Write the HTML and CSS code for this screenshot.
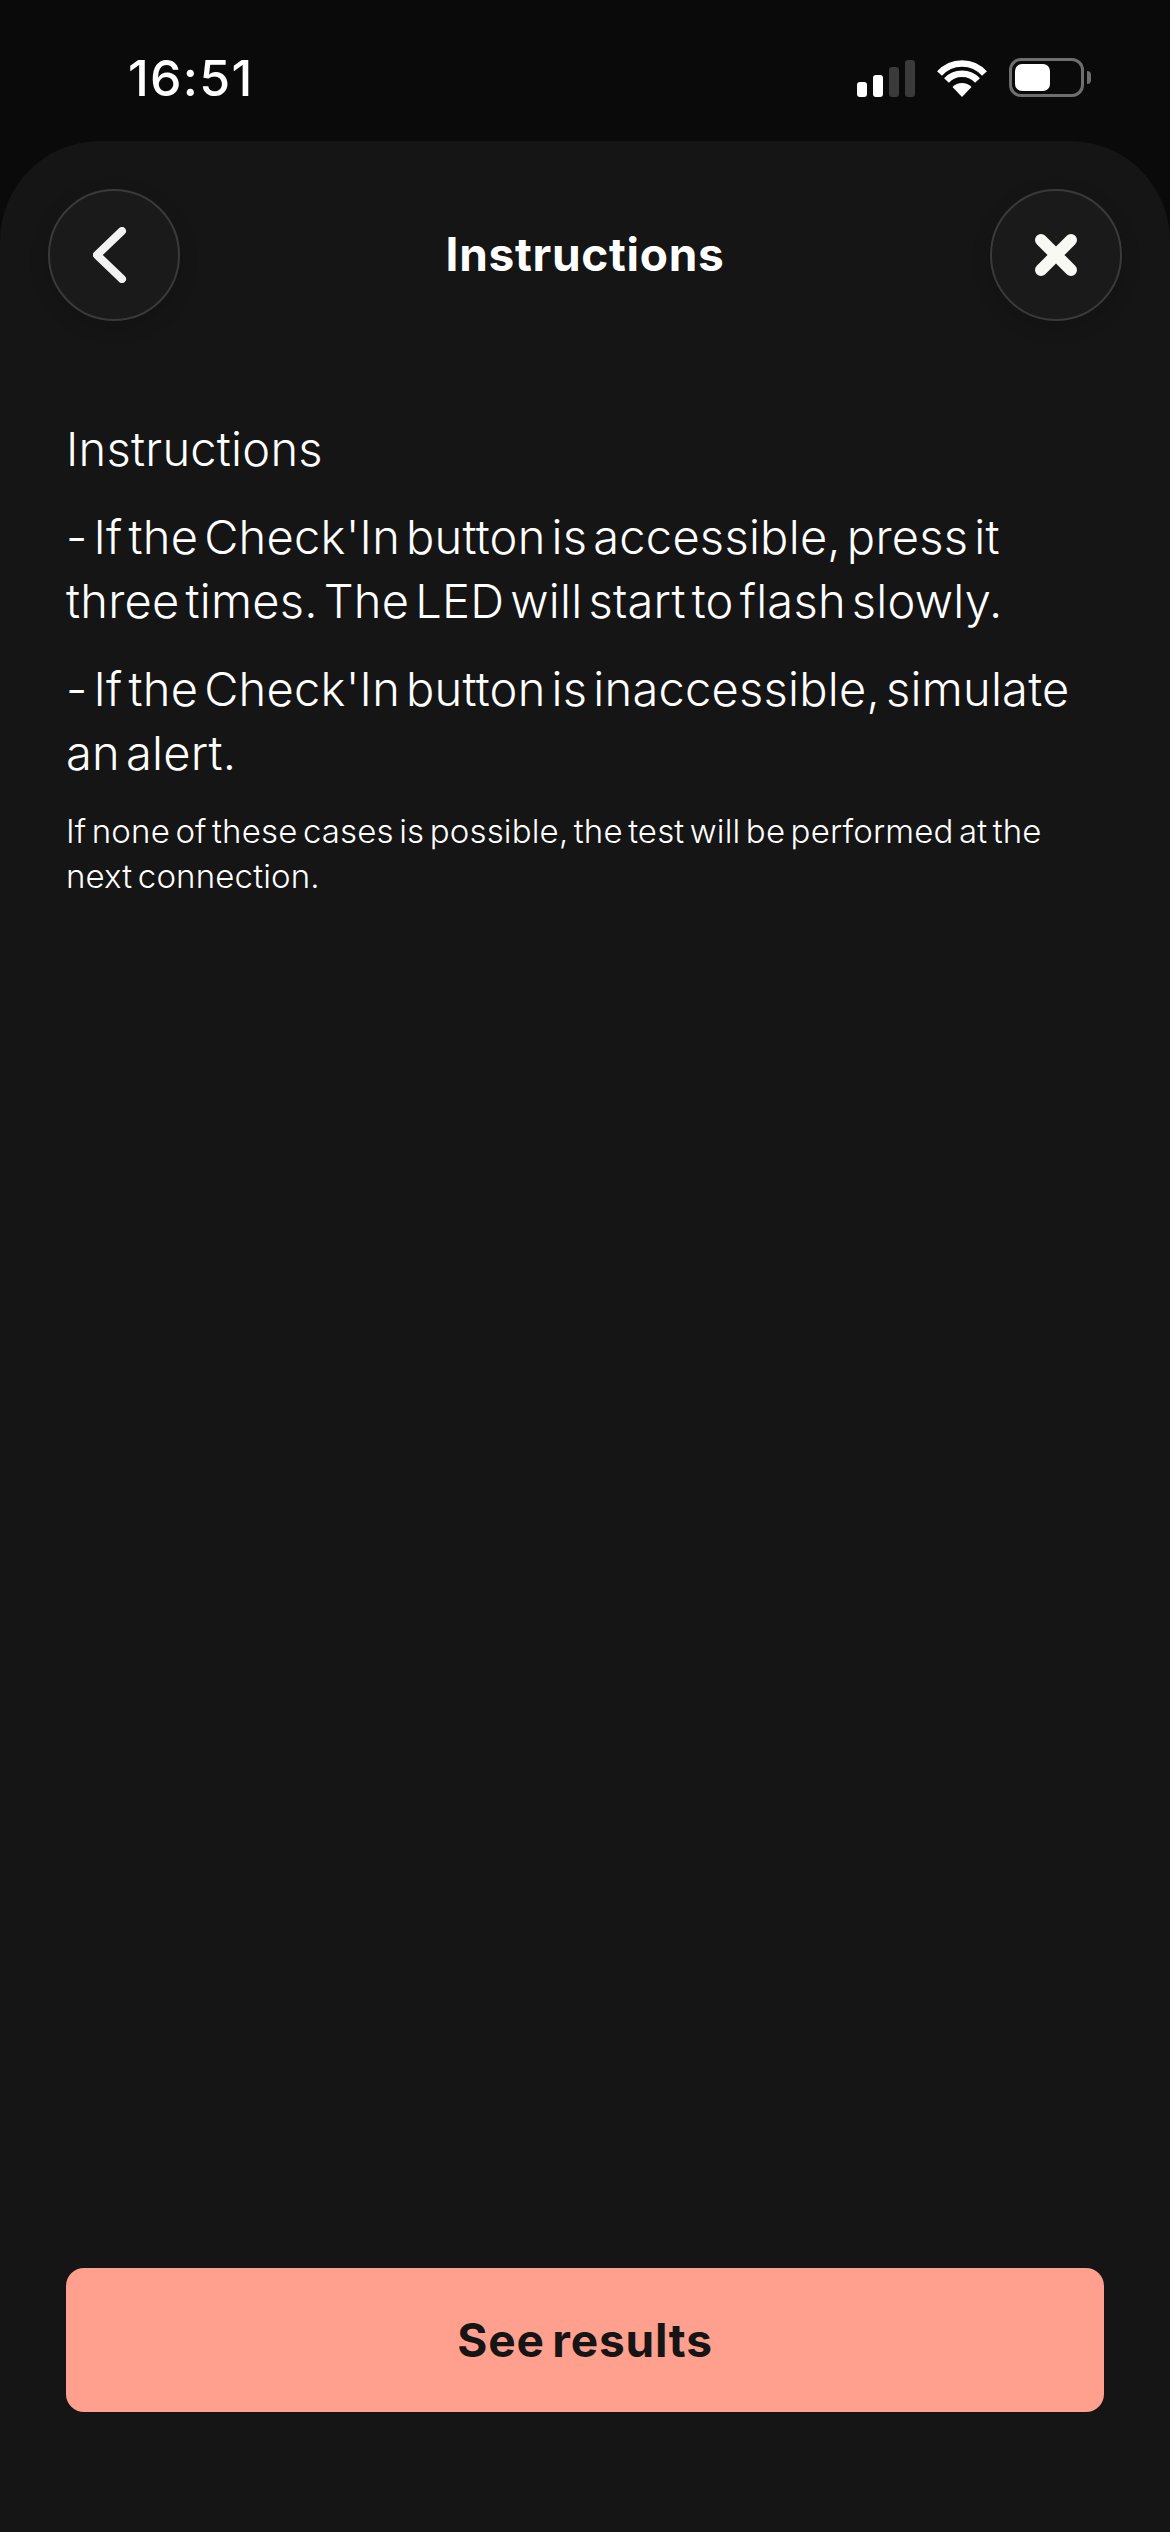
FILE: index.html
```html
<!DOCTYPE html>
<html lang="en">
<head>
    <meta charset="UTF-8">
    <meta name="viewport" content="width=device-width, initial-scale=1.0">
    <title>Instructions</title>
    <link rel="stylesheet" href="styles.css">
</head>
<body>

<div class="status-bar">
    <span class="time">16:51</span>
    <div class="status-icons">
        <div class="signal">
            <span class="bar bar-1"></span>
            <span class="bar bar-2"></span>
            <span class="bar bar-3"></span>
            <span class="bar bar-4"></span>
        </div>
        <svg class="wifi" width="50" height="37" viewBox="0 0 50 37">
            <path d="M25 37 L15.5 27 C20.5 21.5 29.5 21.5 34.5 27 Z" fill="#fff"/>
            <path d="M9.5 20.5 C17.5 11.5 32.5 11.5 40.5 20.5" fill="none" stroke="#fff" stroke-width="6.5"/>
            <path d="M2.5 13.5 C14.5 0 35.5 0 47.5 13.5" fill="none" stroke="#fff" stroke-width="6.5"/>
        </svg>
        <div class="battery">
            <div class="battery-body">
                <div class="battery-fill"></div>
            </div>
            <div class="battery-nib"></div>
        </div>
    </div>
</div>

<div class="sheet">
    <div class="header">
        <button class="round-btn">
            <svg class="chevron" width="34" height="56" viewBox="0 0 34 56">
                <path d="M29 4 L4 28 L29 52" fill="none" stroke="#f2f2f2" stroke-width="8" stroke-linecap="round" stroke-linejoin="round"/>
            </svg>
        </button>
        <h1>Instructions</h1>
        <button class="round-btn">
            <svg width="42" height="42" viewBox="0 0 42 42">
                <path d="M6 6 L36 36 M36 6 L6 36" fill="none" stroke="#f8f8f4" stroke-width="12" stroke-linecap="round"/>
            </svg>
        </button>
    </div>

    <div class="content">
        <p class="text">Instructions</p>
        <p class="text">- If the Check'In button is accessible, press it three times. The LED will start to flash slowly.</p>
        <p class="text">- If the Check'In button is inaccessible, simulate an alert.</p>
        <p class="note">If none of these cases is possible, the test will be performed at the next connection.</p>
    </div>

    <div class="footer">
        <button class="primary">See results</button>
    </div>
</div>

</body>
</html>
```

FILE: styles.css
```css
* {
    box-sizing: border-box;
}
body {
    font-family: Inter, "Noto Sans", sans-serif;
    background-color: #0a0a0a;
    color: #fff;
    margin: 0;
    width: 1170px;
    height: 2532px;
    display: flex;
    flex-direction: column;
    overflow: hidden;
}
.status-bar {
    height: 141px;
    flex-shrink: 0;
    display: flex;
    justify-content: space-between;
    align-items: flex-start;
    padding: 49px 79px 0 128px;
}
.time {
    font-size: 50px;
    line-height: 58px;
    font-weight: 500;
    letter-spacing: 1.3px;
}
.status-icons {
    display: flex;
    align-items: flex-end;
    padding-top: 9px;
}
.signal {
    display: flex;
    align-items: flex-end;
    gap: 6px;
    margin-right: 22px;
}
.bar {
    width: 10px;
    border-radius: 3px;
    background-color: #fff;
}
.bar-1 {
    height: 15px;
}
.bar-2 {
    height: 22px;
}
.bar-3 {
    height: 30px;
    background-color: #3a3a3a;
}
.bar-4 {
    height: 37px;
    background-color: #3a3a3a;
}
.wifi {
    display: block;
    margin-right: 22px;
}
.battery {
    display: flex;
    align-items: center;
}
.battery-body {
    width: 75px;
    height: 39px;
    border: 3px solid #6e6e6e;
    border-radius: 12px;
    padding: 3px;
}
.battery-fill {
    width: 35px;
    height: 100%;
    background-color: #fff;
    border-radius: 7px;
}
.battery-nib {
    width: 4px;
    height: 13px;
    margin-left: 3px;
    background-color: #6e6e6e;
    border-radius: 0 4px 4px 0;
}
.sheet {
    flex: 1;
    background-color: #151515;
    border-radius: 100px 100px 0 0;
    display: flex;
    flex-direction: column;
}
.header {
    display: flex;
    justify-content: space-between;
    align-items: center;
    padding: 48px 48px 0;
}
.header h1 {
    margin: 0 0 2px;
    font-size: 46px;
    font-weight: 700;
    letter-spacing: 0.7px;
}
.round-btn {
    width: 132px;
    height: 132px;
    padding: 0;
    display: flex;
    justify-content: center;
    align-items: center;
    background-color: #1a1a1a;
    border: 2px solid #3a3a3a;
    border-radius: 50%;
    box-shadow: 0 6px 20px rgba(0, 0, 0, 0.15);
}
.chevron {
    margin-right: 9px;
}
.content {
    flex: 1;
    padding: 96px 66px 0;
}
.text {
    margin: 0 0 24px;
    font-size: 47px;
    line-height: 64px;
    font-weight: 300;
    letter-spacing: 0.25px;
    word-spacing: -7.5px;
}
.note {
    margin: 1px 0 0;
    font-size: 33px;
    line-height: 45px;
    font-weight: 300;
    letter-spacing: 0.16px;
    word-spacing: -4px;
}
.footer {
    padding: 0 66px 120px;
}
.primary {
    width: 100%;
    height: 144px;
    background-color: #ffa08f;
    color: #151515;
    border: none;
    border-radius: 18px;
    font-family: inherit;
    font-size: 46px;
    font-weight: 700;
    letter-spacing: 0.8px;
    word-spacing: -4px;
}
```
